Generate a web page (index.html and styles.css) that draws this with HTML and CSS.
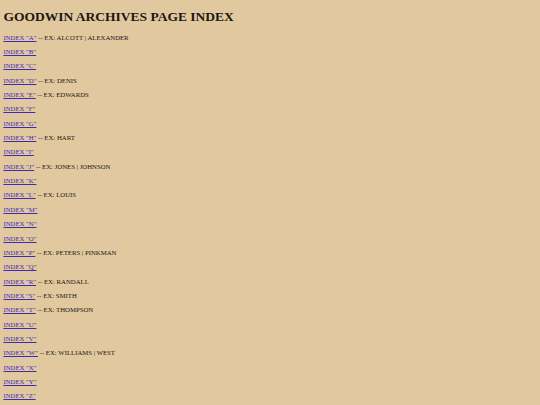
FILE: index.html
```html
<!DOCTYPE html>
<html lang="en">
<head>
    <meta charset="UTF-8">
    <title>Goodwin Archives Page Index</title>
    <link rel="stylesheet" href="styles.css">
</head>
<body>
    <h1>GOODWIN ARCHIVES PAGE INDEX</h1>

    <p><a href="#a">INDEX "A"</a> -- EX: ALCOTT | ALEXANDER</p>
    <p><a href="#b">INDEX "B"</a></p>
    <p><a href="#c">INDEX "C"</a></p>
    <p><a href="#d">INDEX "D"</a> -- EX: DENIS</p>
    <p><a href="#e">INDEX "E"</a> -- EX: EDWARDS</p>
    <p><a href="#f">INDEX "F"</a></p>
    <p><a href="#g">INDEX "G"</a></p>
    <p><a href="#h">INDEX "H"</a> -- EX: HART</p>
    <p><a href="#i">INDEX "I"</a></p>
    <p><a href="#j">INDEX "J"</a> -- EX: JONES | JOHNSON</p>
    <p><a href="#k">INDEX "K"</a></p>
    <p><a href="#l">INDEX "L"</a> -- EX: LOUIS</p>
    <p><a href="#m">INDEX "M"</a></p>
    <p><a href="#n">INDEX "N"</a></p>
    <p><a href="#o">INDEX "O"</a></p>
    <p><a href="#p">INDEX "P"</a> -- EX: PETERS | PINKMAN</p>
    <p><a href="#q">INDEX "Q"</a></p>
    <p><a href="#r">INDEX "R"</a> -- EX: RANDALL</p>
    <p><a href="#s">INDEX "S"</a> -- EX: SMITH</p>
    <p><a href="#t">INDEX "T"</a> -- EX: THOMPSON</p>
    <p><a href="#u">INDEX "U"</a></p>
    <p><a href="#v">INDEX "V"</a></p>
    <p><a href="#w">INDEX "W"</a> -- EX: WILLIAMS | WEST</p>
    <p><a href="#x">INDEX "X"</a></p>
    <p><a href="#y">INDEX "Y"</a></p>
    <p><a href="#z">INDEX "Z"</a></p>
</body>
</html>
```

FILE: styles.css
```css
/* plain archive index, small print on parchment */
body {
    margin: 0 3.4px;
    padding-top: 0.1px; /* keep the heading margin inside the body */
    background-color: #e2c89e;
    color: #1c1712;
    font-family: "Liberation Serif", "Times New Roman", serif;
    font-size: 6.75px;
}

h1 {
    font-size: 13.5px;
    line-height: 15.6px;
    font-weight: bold;
    margin: 9px 0;
}

p {
    line-height: 7.8px;
    margin: 6.56px 0;
}

a {
    color: #3a2cb4;
}
```
